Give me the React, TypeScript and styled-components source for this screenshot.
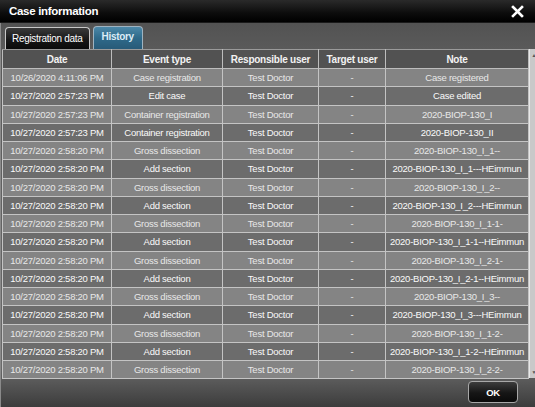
import React from "react";
import styled, { createGlobalStyle } from "styled-components";

const Global = createGlobalStyle`
  html, body { margin: 0; padding: 0; background: #2b2b2b; }
  body { font-family: "Segoe UI", "Liberation Sans", Arial, sans-serif; }
`;

const Window = styled.div`
  width: 535px;
  height: 407px;
  display: flex;
  flex-direction: column;
  background: linear-gradient(#4c4c4c, #5a5a5a 12%, #6a6a6a 90%, #3c3c3c);
  box-sizing: border-box;
  overflow: hidden;
`;

const TitleBar = styled.div`
  height: 23px;
  flex: none;
  display: flex;
  align-items: center;
  justify-content: space-between;
  padding: 0 11px 0 9px;
  background: linear-gradient(#2a2a2a, #0c0c0c 60%, #000);
  border-bottom: 1px solid #1a1a1a;
  box-sizing: border-box;
`;

const Title = styled.div`
  color: #fff;
  font-weight: bold;
  font-size: 11.5px;
  letter-spacing: -0.3px;
`;

const Body = styled.div`
  flex: 1;
  display: flex;
  flex-direction: column;
  padding: 3px 0 0 1px;
  border-left: 1px solid #8a8a8a;
  min-height: 0;
`;

const TabRow = styled.div`
  display: flex;
  align-items: flex-end;
  gap: 3px;
  padding-left: 3px;
  height: 23px;
  flex: none;
`;

const Tab = styled.div<{ $active?: boolean }>`
  height: ${(p) => (p.$active ? 23 : 22)}px;
  box-sizing: border-box;
  padding: 0 ${(p) => (p.$active ? 8 : 6)}px;
  display: flex;
  align-items: center;
  justify-content: center;
  border: 1px solid ${(p) => (p.$active ? "#9fb3c0" : "#c8c8c8")};
  border-bottom: none;
  border-radius: 4px 4px 0 0;
  font-size: 10px;
  letter-spacing: -0.3px;
  font-weight: ${(p) => (p.$active ? "bold" : "normal")};
  color: ${(p) => (p.$active ? "#dcecf6" : "#fff")};
  background: ${(p) =>
    p.$active
      ? "linear-gradient(#4c88a8, #2f6a8a 50%, #285a78)"
      : "linear-gradient(#3a3a3a, #151515 60%, #0a0a0a)"};
  padding-bottom: ${(p) => (p.$active ? 3 : 0)}px;
`;

const TableFrame = styled.div`
  display: flex;
  width: 531px;
  height: 329px;
  flex: none;
`;

const Grid = styled.table`
  width: 521px;
  flex: none;
  border-collapse: collapse;
  table-layout: fixed;
  font-size: 9.5px;
  letter-spacing: -0.25px;
  color: #f2f2f2;
`;

const HeadCell = styled.th<{ $w: number }>`
  width: ${(p) => p.$w}px;
  height: 18px;
  padding: 0;
  background: #525252;
  border: 1px solid #bdbdbd;
  border-top: 1px solid #9a9a9a;
  font-weight: bold;
  font-size: 10px;
  text-align: center;
  white-space: nowrap;
`;

const Row = styled.tr<{ $light: boolean }>`
  height: 18.25px;
  background: ${(p) => (p.$light ? "#848484" : "#6c6c6c")};
  color: ${(p) => (p.$light ? "#e8e8e8" : "#fafafa")};
`;

const Cell = styled.td`
  padding: 0;
  border: 1px solid #c4c4c4;
  text-align: center;
  white-space: nowrap;
  overflow: hidden;
`;

const Scroll = styled.div`
  width: 9px;
  flex: none;
  background: #c9c9c9;
  border-left: 1px solid #e8e8e8;
  display: flex;
  flex-direction: column;
  justify-content: space-between;
  align-items: center;
  padding: 3px 0;
  box-sizing: border-box;
  color: #555;
  font-size: 5px;
  line-height: 6px;
`;

const Footer = styled.div`
  flex: 1;
  display: flex;
  justify-content: flex-end;
  align-items: flex-start;
  padding: 3px 17px 0 0;
`;

const OkButton = styled.button`
  width: 50px;
  height: 22px;
  border-radius: 4px;
  border: 1px solid #a8a8a8;
  background: linear-gradient(#3c3c3c, #161616 55%, #0a0a0a);
  color: #fff;
  font-family: inherit;
  font-size: 9.5px;
  font-weight: bold;
  letter-spacing: -0.4px;
  padding: 0;
`;

const columns = [
  { t: "Date", w: 108 },
  { t: "Event type", w: 110 },
  { t: "Responsible user", w: 95 },
  { t: "Target user", w: 66 },
  { t: "Note", w: 142 },
];

const T = "10/27/2020 2:58:20 PM";
const rows: [string, string, string][] = [
  ["10/26/2020 4:11:06 PM", "Case registration", "Case registered"],
  ["10/27/2020 2:57:23 PM", "Edit case", "Case edited"],
  ["10/27/2020 2:57:23 PM", "Container registration", "2020-BIOP-130_I"],
  ["10/27/2020 2:57:23 PM", "Container registration", "2020-BIOP-130_II"],
  [T, "Gross dissection", "2020-BIOP-130_I_1--"],
  [T, "Add section", "2020-BIOP-130_I_1---HEimmun"],
  [T, "Gross dissection", "2020-BIOP-130_I_2--"],
  [T, "Add section", "2020-BIOP-130_I_2---HEimmun"],
  [T, "Gross dissection", "2020-BIOP-130_I_1-1-"],
  [T, "Add section", "2020-BIOP-130_I_1-1--HEimmun"],
  [T, "Gross dissection", "2020-BIOP-130_I_2-1-"],
  [T, "Add section", "2020-BIOP-130_I_2-1--HEimmun"],
  [T, "Gross dissection", "2020-BIOP-130_I_3--"],
  [T, "Add section", "2020-BIOP-130_I_3---HEimmun"],
  [T, "Gross dissection", "2020-BIOP-130_I_1-2-"],
  [T, "Add section", "2020-BIOP-130_I_1-2--HEimmun"],
  [T, "Gross dissection", "2020-BIOP-130_I_2-2-"],
];

const CloseIcon = () => (
  <svg width="13" height="13" viewBox="0 0 13 13">
    <path d="M2 2 L11 11 M11 2 L2 11" stroke="#fff" strokeWidth="2.6" strokeLinecap="square" />
  </svg>
);

export default function App() {
  return (
    <>
      <Global />
      <Window>
        <TitleBar>
          <Title>Case information</Title>
          <CloseIcon />
        </TitleBar>
        <Body>
          <TabRow>
            <Tab>Registration data</Tab>
            <Tab $active>History</Tab>
          </TabRow>
          <TableFrame>
            <Grid>
              <thead>
                <tr>
                  {columns.map((c) => (
                    <HeadCell key={c.t} $w={c.w}>
                      {c.t}
                    </HeadCell>
                  ))}
                </tr>
              </thead>
              <tbody>
                {rows.map((r, i) => (
                  <Row key={i} $light={i % 2 === 0}>
                    <Cell>{r[0]}</Cell>
                    <Cell>{r[1]}</Cell>
                    <Cell>Test Doctor</Cell>
                    <Cell>-</Cell>
                    <Cell>{r[2]}</Cell>
                  </Row>
                ))}
              </tbody>
            </Grid>
            <Scroll>
              <span>▲</span>
              <span>▼</span>
            </Scroll>
          </TableFrame>
          <Footer>
            <OkButton>OK</OkButton>
          </Footer>
        </Body>
      </Window>
    </>
  );
}
